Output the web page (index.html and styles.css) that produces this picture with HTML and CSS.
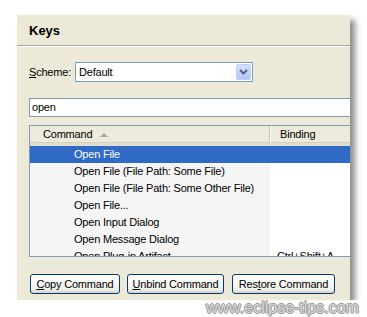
FILE: index.html
```html
<!DOCTYPE html>
<html lang="en">
<head>
    <meta charset="UTF-8">
    <title>Keys</title>
    <link rel="stylesheet" href="styles.css">
</head>
<body>
    <div class="window">
        <div class="title">Keys</div>
        <div class="content">
            <div class="scheme-row">
                <label class="scheme-label"><u>S</u>cheme:</label>
                <div class="combo">
                    <span class="combo-text">Default</span>
                    <span class="combo-btn">
                        <svg width="9" height="6" viewBox="0 0 9 6"><path d="M1 1 L4.5 4.5 L8 1" fill="none" stroke="#4d6185" stroke-width="2"/></svg>
                    </span>
                </div>
            </div>
            <div class="search">open</div>
            <div class="table">
                <div class="table-head">
                    <div class="col-command">Command <span class="sort-arrow"></span></div>
                    <div class="col-binding">Binding</div>
                </div>
                <div class="row selected"><div class="cell-command">Open File</div><div class="cell-binding"></div></div>
                <div class="row"><div class="cell-command">Open File (File Path: Some File)</div><div class="cell-binding"></div></div>
                <div class="row"><div class="cell-command">Open File (File Path: Some Other File)</div><div class="cell-binding"></div></div>
                <div class="row"><div class="cell-command">Open File...</div><div class="cell-binding"></div></div>
                <div class="row"><div class="cell-command">Open Input Dialog</div><div class="cell-binding"></div></div>
                <div class="row"><div class="cell-command">Open Message Dialog</div><div class="cell-binding"></div></div>
                <div class="row"><div class="cell-command">Open Plug-in Artifact</div><div class="cell-binding">Ctrl+Shift+A</div></div>
            </div>
            <div class="buttons">
                <button class="btn btn-copy"><u>C</u>opy Command</button>
                <button class="btn btn-unbind"><u>U</u>nbind Command</button>
                <button class="btn btn-restore">Res<u>t</u>ore Command</button>
            </div>
        </div>
    </div>
    <div class="watermark">www.eclipse-tips.com</div>
</body>
</html>
```

FILE: styles.css
```css
body {
    margin: 0;
    padding: 15px 0 0 17px;
    background-color: #fff;
    font-family: "Liberation Sans", Arial, sans-serif;
    font-size: 11px;
    letter-spacing: -0.2px;
    color: #000;
}

.window {
    width: 333px;
    height: 285px;
    background-color: #ece9d8;
    overflow: hidden;
    box-shadow: 5px 5px 6px rgba(0, 0, 0, 0.45);
}

.title {
    height: 30px;
    line-height: 31px;
    padding-left: 12px;
    font-weight: bold;
    font-size: 13px;
    letter-spacing: 0;
    border-bottom: 1px solid #aca899;
    box-shadow: 0 1px 0 #fff;
}

.content {
    padding: 16px 0 0 12px;
}

.scheme-row {
    display: flex;
    align-items: center;
    height: 20px;
}

.scheme-label {
    width: 46px;
}

.combo {
    width: 176px;
    height: 18px;
    border: 1px solid #7f9db9;
    background-color: #fff;
    display: flex;
    align-items: center;
    justify-content: space-between;
}

.combo-text {
    padding-left: 3px;
}

.combo-btn {
    width: 15px;
    height: 16px;
    margin-right: 1px;
    border: 1px solid #b9cdf5;
    border-radius: 2px;
    box-sizing: border-box;
    background: linear-gradient(#d2e0fc, #b2c7f5);
    display: flex;
    align-items: center;
    justify-content: center;
}

.search {
    margin-top: 16px;
    width: 340px;
    height: 17px;
    line-height: 17px;
    border: 1px solid #7f9db9;
    background-color: #fff;
    padding-left: 2px;
}

.table {
    margin-top: 8px;
    width: 340px;
    height: 130px;
    border: 1px solid #7f9db9;
    background-color: #fff;
    overflow: hidden;
}

.table-head {
    display: flex;
    height: 17px;
    line-height: 17px;
    background-color: #ebeadb;
    border-bottom: 3px solid #e2decd;
    box-shadow: inset 0 -1px 0 #d6d2c2;
}

.col-command {
    width: 226px;
    padding-left: 13px;
    border-right: 1px solid #c7c5b2;
    box-shadow: 1px 0 0 #fff;
    display: flex;
    align-items: center;
    gap: 8px;
}

.sort-arrow {
    width: 0;
    height: 0;
    border-left: 4px solid transparent;
    border-right: 4px solid transparent;
    border-bottom: 4px solid #aca899;
}

.col-binding {
    padding-left: 10px;
}

.row {
    display: flex;
    height: 17px;
    line-height: 17px;
}

.cell-command {
    width: 196px;
    padding-left: 44px;
    background-color: #f5f5f5;
    white-space: nowrap;
}

.cell-binding {
    padding-left: 7px;
    white-space: nowrap;
}

.row.selected {
    background-color: #316ac5;
    color: #fff;
}

.row.selected .cell-command {
    background-color: #316ac5;
}

.buttons {
    display: flex;
    margin-top: 17px;
    margin-left: 1px;
}

.btn {
    height: 20px;
    border: 1px solid #003c74;
    border-radius: 3px;
    background: linear-gradient(#fff, #f0f0ea 80%, #d6d0c5);
    font-family: "Liberation Sans", Arial, sans-serif;
    font-size: 11px;
    letter-spacing: -0.2px;
    color: #000;
    padding: 0;
}

.btn-copy {
    width: 90px;
}

.btn-unbind {
    width: 97px;
    margin-left: 7px;
}

.btn-restore {
    width: 103px;
    margin-left: 8px;
}

.watermark {
    position: absolute;
    left: 206px;
    top: 299px;
    font-family: "Liberation Sans", Arial, sans-serif;
    font-size: 16px;
    letter-spacing: 0;
    color: #d8d8d8;
    text-shadow: 1px 0 0 #999, -1px 0 0 #999, 0 1px 0 #999, 0 -1px 0 #999;
}
```
